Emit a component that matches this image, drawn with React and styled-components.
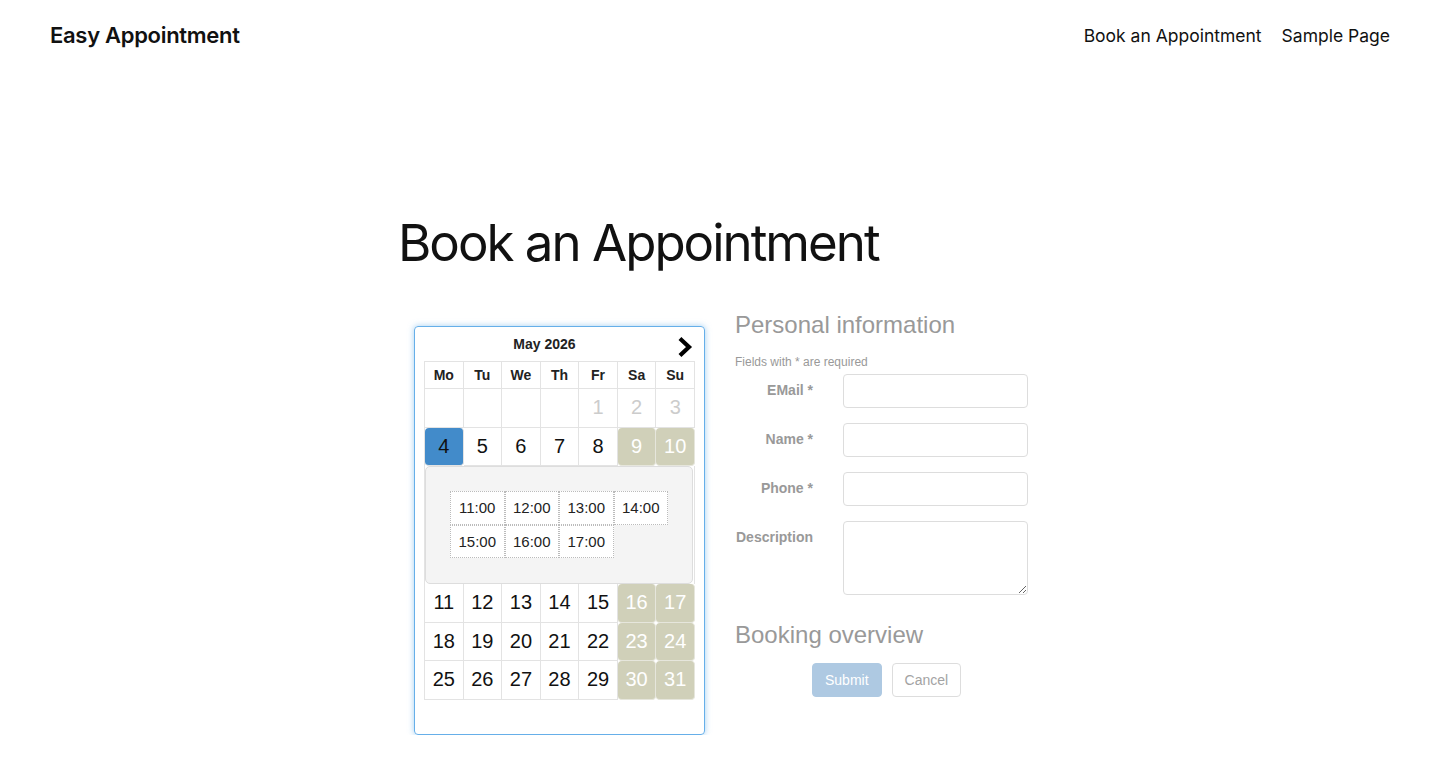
import React from "react";
import styled, { createGlobalStyle } from "styled-components";

const GlobalStyle = createGlobalStyle`
  * { box-sizing: border-box; }
  body {
    margin: 0;
    background: #fff;
    font-family: Inter, "Noto Sans", sans-serif;
    color: #111;
  }
`

const Header = styled.header`
  height: 70px;
  padding: 0 50px;
  display: flex;
  align-items: center;
  justify-content: space-between;
`

const Logo = styled.a`
  font-size: 22px;
  font-weight: 600;
  letter-spacing: -0.3px;
  color: #111;
  text-decoration: none;
`

const Nav = styled.nav`
  display: flex;
  gap: 20px;
  a {
    font-size: 17.5px;
    font-weight: 400;
    color: #111;
    text-decoration: none;
  }
`

const Main = styled.main`
  width: 644px;
  margin: 0 auto;
`

const Title = styled.h1`
  margin: 138px 0 0;
  font-size: 51px;
  line-height: 70px;
  font-weight: 400;
  letter-spacing: -2px;
`

const Booking = styled.div`
  display: flex;
  align-items: flex-start;
  gap: 30px;
  margin-top: 33px;
  padding-left: 16px;
  font-family: "Liberation Sans", Arial, sans-serif;
`

const Calendar = styled.div`
  width: 291px;
  margin-top: 15px;
  padding: 0 9px 34px;
  border: 1px solid #66afe9;
  border-radius: 4px;
  box-shadow: 0 0 6px rgba(102, 175, 233, 0.6);
`

const CalHead = styled.div`
  height: 34px;
  display: flex;
  align-items: center;
`

const Month = styled.div`
  flex: 1;
  text-align: center;
  font-size: 14px;
  font-weight: 700;
  color: #222;
`

const NextButton = styled.button`
  width: 30px;
  height: 34px;
  padding: 0 1px 0 0;
  border: none;
  background: none;
  display: flex;
  align-items: center;
  justify-content: flex-end;
  cursor: pointer;
  svg { margin-top: 6px; }
`

const Grid = styled.div`
  display: grid;
  grid-template-columns: repeat(7, 1fr);
  border-top: 1px solid #e3e3e3;
  border-left: 1px solid #e3e3e3;
`

const DayName = styled.div`
  height: 27px;
  display: flex;
  align-items: center;
  justify-content: center;
  font-size: 14px;
  font-weight: 700;
  color: #222;
  border-right: 1px solid #e3e3e3;
  border-bottom: 1px solid #e3e3e3;
`

const dayBg = { selected: "#428bca", weekend: "#d0d0b9" }
const dayColor = { past: "#cccccc", weekend: "#ffffff", selected: "#111", normal: "#111" }

const Day = styled.div`
  height: 38.5px;
  display: flex;
  align-items: center;
  justify-content: center;
  font-size: 20px;
  color: ${(p) => dayColor[p.$kind]};
  background: ${(p) => dayBg[p.$kind] || "#fff"};
  border-radius: ${(p) => (dayBg[p.$kind] ? "4px" : "0")};
  border-right: 1px solid ${(p) => (p.$kind === "weekend" ? "#e6e6dc" : "#e3e3e3")};
  border-bottom: 1px solid ${(p) => (p.$kind === "weekend" ? "#e6e6dc" : "#e3e3e3")};
  cursor: ${(p) => (p.$kind === "past" ? "default" : "pointer")};
`

const SlotRow = styled.div`
  grid-column: 1 / -1;
  padding: 0 1px 0 0;
  border-right: 1px solid #e3e3e3;
`

const SlotPanel = styled.div`
  height: 118px;
  padding: 24px 24px;
  background: #f4f4f4;
  border: 1px solid #dddddd;
  border-radius: 5px;
  display: flex;
  flex-wrap: wrap;
  align-content: flex-start;
`

const Slot = styled.button`
  width: 54.5px;
  height: 33.5px;
  padding: 0;
  font-family: "Liberation Sans", Arial, sans-serif;
  font-size: 15px;
  color: #222;
  background: #fff;
  border: 1px dotted #bbbbbb;
  cursor: pointer;
`

const Form = styled.form`
  width: 293px;
  color: #999;
`

const SectionTitle = styled.h3`
  margin: ${(p) => p.$top}px 0 0;
  font-size: 24px;
  line-height: 28.6px;
  font-weight: 400;
  color: #999;
`

const Hint = styled.p`
  margin: 14px 0 0;
  font-size: 12px;
  line-height: 17px;
  color: #999;
`

const Row = styled.div`
  display: grid;
  grid-template-columns: 93px 185px;
  column-gap: 15px;
  margin-top: ${(p) => p.$gap}px;
`

const Label = styled.label`
  padding: 6px 15px 0 0;
  text-align: right;
  font-size: 14px;
  line-height: 20px;
  font-weight: 700;
  color: #999;
`

const Input = styled.input`
  height: 34px;
  border: 1px solid #dddddd;
  border-radius: 4px;
  padding: 6px 12px;
  font-size: 14px;
`

const TextArea = styled.textarea`
  height: 74px;
  border: 1px solid #dddddd;
  border-radius: 4px;
  padding: 6px 12px;
  font-size: 14px;
  font-family: inherit;
`

const Actions = styled.div`
  display: flex;
  gap: 10px;
  margin: 14px 0 0 77px;
`

const Button = styled.button`
  height: 34px;
  padding: 0 12px;
  font-family: "Liberation Sans", Arial, sans-serif;
  font-size: 14px;
  border-radius: 4px;
  border: 1px solid ${(p) => (p.$primary ? "#aec9e2" : "#dddddd")};
  background: ${(p) => (p.$primary ? "#aec9e2" : "#fff")};
  color: ${(p) => (p.$primary ? "#fff" : "#a3a3a3")};
  cursor: pointer;
`

const dayNames = ["Mo", "Tu", "We", "Th", "Fr", "Sa", "Su"]
const slots = ["11:00", "12:00", "13:00", "14:00", "15:00", "16:00", "17:00"]

// May 2026 starts on a Friday
const weeks = [
  [null, null, null, null, 1, 2, 3],
  [4, 5, 6, 7, 8, 9, 10],
  [11, 12, 13, 14, 15, 16, 17],
  [18, 19, 20, 21, 22, 23, 24],
  [25, 26, 27, 28, 29, 30, 31],
]

const kindOf = (d, col) => {
  if (d === null) return "normal"
  if (d < 4) return "past"
  if (d === 4) return "selected"
  if (col > 4) return "weekend"
  return "normal"
}

const Chevron = () => (
  <svg width="16" height="20" viewBox="0 0 16 20">
    <path d="M3.5 3 L11 10 L3.5 17" fill="none" stroke="#000" strokeWidth="4.2" strokeLinecap="square" strokeLinejoin="miter" />
  </svg>
)

const App = () => {
  return (
    <>
      <GlobalStyle />
      <Header>
        <Logo href="#">Easy Appointment</Logo>
        <Nav>
          <a href="#">Book an Appointment</a>
          <a href="#">Sample Page</a>
        </Nav>
      </Header>
      <Main>
        <Title>Book an Appointment</Title>
        <Booking>
          <Calendar>
            <CalHead>
              <Month>May 2026</Month>
              <NextButton type="button" aria-label="Next month">
                <Chevron />
              </NextButton>
            </CalHead>
            <Grid>
              {dayNames.map((n) => (
                <DayName key={n}>{n}</DayName>
              ))}
              {weeks.map((week, w) => (
                <React.Fragment key={w}>
                  {week.map((d, col) => (
                    <Day key={col} $kind={kindOf(d, col)}>
                      {d}
                    </Day>
                  ))}
                  {w === 1 && (
                    <SlotRow>
                      <SlotPanel>
                        {slots.map((s) => (
                          <Slot key={s} type="button">{s}</Slot>
                        ))}
                      </SlotPanel>
                    </SlotRow>
                  )}
                </React.Fragment>
              ))}
            </Grid>
          </Calendar>
          <Form onSubmit={(e) => e.preventDefault()}>
            <SectionTitle $top={0}>Personal information</SectionTitle>
            <Hint>Fields with * are required</Hint>
            <Row $gap={3}>
              <Label>EMail *</Label>
              <Input type="email" />
            </Row>
            <Row $gap={15}>
              <Label>Name *</Label>
              <Input type="text" />
            </Row>
            <Row $gap={15}>
              <Label>Phone *</Label>
              <Input type="tel" />
            </Row>
            <Row $gap={15}>
              <Label>Description</Label>
              <TextArea />
            </Row>
            <SectionTitle $top={26}>Booking overview</SectionTitle>
            <Actions>
              <Button $primary type="submit">Submit</Button>
              <Button type="button">Cancel</Button>
            </Actions>
          </Form>
        </Booking>
      </Main>
    </>
  )
}

export default App
